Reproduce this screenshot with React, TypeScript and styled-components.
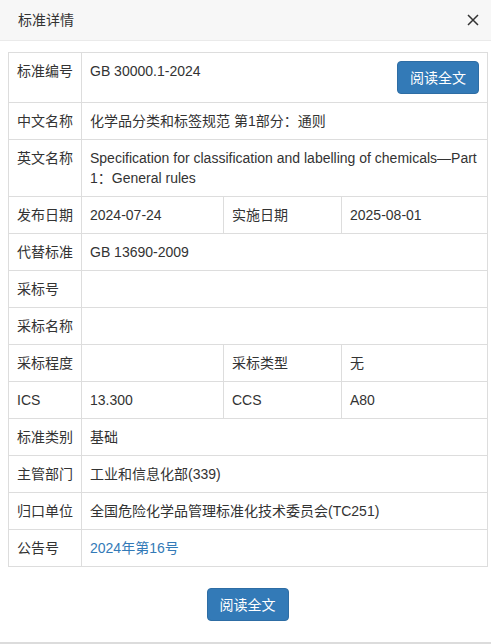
import React from "react";
import styled, { createGlobalStyle } from "styled-components";

const GlobalStyle = createGlobalStyle`
  html, body {
    margin: 0;
    padding: 0;
    background: #fff;
  }
  body {
    font-family: "Liberation Sans", Arial, "Noto Sans CJK SC", sans-serif;
    font-size: 14px;
    color: #333;
  }
`;

const Modal = styled.div`
  width: 491px;
  height: 644px;
  box-sizing: border-box;
  background: #fff;
  display: flex;
  flex-direction: column;
  border-bottom: 2px solid #dcdcdc;
`;

const Header = styled.div`
  height: 41px;
  box-sizing: border-box;
  padding: 0 8px 0 18px;
  background: #f7f7f7;
  border-bottom: 1px solid #eaeaea;
  display: flex;
  align-items: center;
  justify-content: space-between;
`;

const Title = styled.span`
  font-size: 14px;
  line-height: 20px;
  color: #333;
`;

const CloseButton = styled.button`
  width: 20px;
  height: 20px;
  padding: 0;
  border: 0;
  background: transparent;
  display: flex;
  align-items: center;
  justify-content: center;
  cursor: pointer;
`;

const Body = styled.div`
  padding: 11px 4px 0 8px;
`;

const Table = styled.table`
  width: 479px;
  border-collapse: collapse;
  table-layout: fixed;
`;

const Cell = styled.td<{ $label?: boolean }>`
  border: 1px solid #ddd;
  padding: 8px 8px;
  line-height: 20px;
  vertical-align: top;
  color: #333;
  white-space: ${(p) => (p.$label ? "nowrap" : "normal")};
`;

const Link = styled.a`
  color: #337ab7;
  text-decoration: none;
`;

const PrimaryButton = styled.button<{ $float?: boolean }>`
  float: ${(p) => (p.$float ? "right" : "none")};
  width: 82px;
  height: 33px;
  padding: 0;
  border: 1px solid #2e6da4;
  border-radius: 4px;
  background: #337ab7;
  color: #fff;
  font-family: inherit;
  font-size: 14px;
  line-height: 20px;
  cursor: pointer;
`;

const Footer = styled.div`
  display: flex;
  justify-content: center;
  padding: 21px 4px 0 8px;
`;

interface Row {
  label: string;
  value?: React.ReactNode;
  label2?: string;
  value2?: React.ReactNode;
}

const rows: Row[] = [
  { label: "中文名称", value: "化学品分类和标签规范 第1部分：通则" },
  {
    label: "英文名称",
    value:
      "Specification for classification and labelling of chemicals—Part 1：General rules",
  },
  { label: "发布日期", value: "2024-07-24", label2: "实施日期", value2: "2025-08-01" },
  { label: "代替标准", value: "GB 13690-2009" },
  { label: "采标号" },
  { label: "采标名称" },
  { label: "采标程度", value: "", label2: "采标类型", value2: "无" },
  { label: "ICS", value: "13.300", label2: "CCS", value2: "A80" },
  { label: "标准类别", value: "基础" },
  { label: "主管部门", value: "工业和信息化部(339)" },
  { label: "归口单位", value: "全国危险化学品管理标准化技术委员会(TC251)" },
  { label: "公告号", value: <Link href="#">2024年第16号</Link> },
];

function CloseIcon() {
  return (
    <svg width="12" height="12" viewBox="0 0 12 12">
      <path d="M1 1 L11 11 M11 1 L1 11" stroke="#333" strokeWidth="1.5" />
    </svg>
  );
}

function App() {
  return (
    <>
      <GlobalStyle />
      <Modal>
        <Header>
          <Title>标准详情</Title>
          <CloseButton aria-label="close">
            <CloseIcon />
          </CloseButton>
        </Header>
        <Body>
          <Table>
            <colgroup>
              <col style={{ width: 73 }} />
              <col style={{ width: 142 }} />
              <col style={{ width: 118 }} />
              <col style={{ width: 146 }} />
            </colgroup>
            <tbody>
              <tr>
                <Cell $label>标准编号</Cell>
                <Cell colSpan={3}>
                  <PrimaryButton $float>阅读全文</PrimaryButton>
                  GB 30000.1-2024
                </Cell>
              </tr>
              {rows.map((row) =>
                row.label2 ? (
                  <tr key={row.label}>
                    <Cell $label>{row.label}</Cell>
                    <Cell>{row.value}</Cell>
                    <Cell $label>{row.label2}</Cell>
                    <Cell>{row.value2}</Cell>
                  </tr>
                ) : (
                  <tr key={row.label}>
                    <Cell $label>{row.label}</Cell>
                    <Cell colSpan={3}>{row.value}</Cell>
                  </tr>
                )
              )}
            </tbody>
          </Table>
        </Body>
        <Footer>
          <PrimaryButton>阅读全文</PrimaryButton>
        </Footer>
      </Modal>
    </>
  );
}

export default App;
